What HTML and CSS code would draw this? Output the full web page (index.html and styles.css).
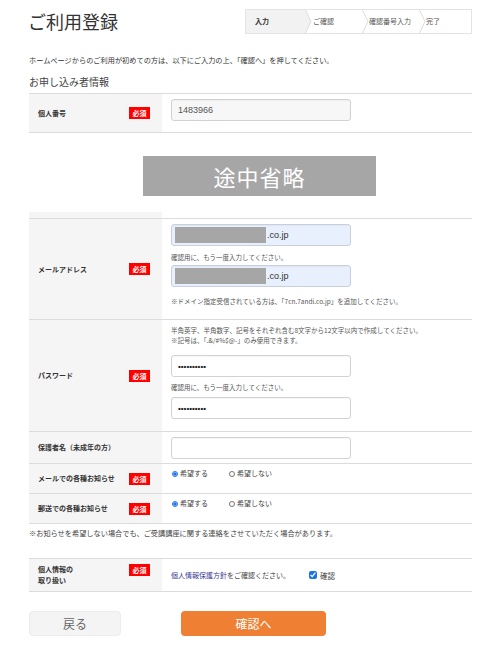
FILE: index.html
```html
<!DOCTYPE html>
<html lang="ja">
<head>
	<meta charset="utf-8">
	<title>ご利用登録</title>
	<link rel="stylesheet" href="styles.css">
</head>
<body>
	<div class="page">
		<div class="head">
			<h1 class="title">ご利用登録</h1>
			<!-- Step indicator -->
			<ol class="steps">
				<li class="step step-current">入力</li>
				<li class="chev chev-current"><svg viewBox="0 0 7 25" width="7" height="25"><path d="M0 0 L6 12.5 L0 25 Z" fill="#f2f2f2"/><path d="M0 0 L6 12.5 L0 25" fill="none" stroke="#dcdcdc" stroke-width="1"/></svg></li>
				<li class="step step-2">ご確認</li>
				<li class="chev"><svg viewBox="0 0 7 25" width="7" height="25"><path d="M0 0 L6 12.5 L0 25" fill="none" stroke="#dcdcdc" stroke-width="1"/></svg></li>
				<li class="step step-3">確認番号入力</li>
				<li class="chev"><svg viewBox="0 0 7 25" width="7" height="25"><path d="M0 0 L6 12.5 L0 25" fill="none" stroke="#dcdcdc" stroke-width="1"/></svg></li>
				<li class="step step-4">完了</li>
			</ol>
		</div>

		<p class="intro">ホームページからのご利用が初めての方は、以下にご入力の上、「確認へ」を押してください。</p>
		<h2 class="section">お申し込み者情報</h2>

		<div class="form-table">
			<div class="row row-num">
				<div class="label"><span>個人番号</span><span class="req">必須</span></div>
				<div class="cell"><input class="text-input readonly" type="text" value="1483966" readonly></div>
			</div>
		</div>

		<div class="omitted">途中省略</div>

		<div class="form-table form-table-cont">
			<div class="row row-stub">
				<div class="label"></div>
				<div class="cell"></div>
			</div>
			<div class="row row-mail">
				<div class="label"><span>メールアドレス</span><span class="req">必須</span></div>
				<div class="cell">
					<div class="text-input autofill"><span class="redact"></span>.co.jp</div>
					<p class="hint">確認用に、もう一度入力してください。</p>
					<div class="text-input autofill"><span class="redact"></span>.co.jp</div>
					<p class="hint hint-note">※ドメイン指定受信されている方は、「7cn.7andi.co.jp」を追加してください。</p>
				</div>
			</div>
			<div class="row row-pass">
				<div class="label"><span>パスワード</span><span class="req">必須</span></div>
				<div class="cell">
					<p class="rule">半角英字、半角数字、記号をそれぞれ含む8文字から12文字以内で作成してください。</p>
					<p class="rule">※記号は、「.&amp;/#%$@-」のみ使用できます。</p>
					<input class="text-input pass" type="password" value="abcdefgh12">
					<p class="hint">確認用に、もう一度入力してください。</p>
					<input class="text-input pass" type="password" value="abcdefgh12">
				</div>
			</div>
			<div class="row row-guard">
				<div class="label"><span>保護者名（未成年の方）</span></div>
				<div class="cell"><input class="text-input" type="text"></div>
			</div>
			<div class="row row-radio">
				<div class="label"><span>メールでの各種お知らせ</span><span class="req">必須</span></div>
				<div class="cell radios">
					<label><input type="radio" name="mail" checked>希望する</label>
					<label><input type="radio" name="mail">希望しない</label>
				</div>
			</div>
			<div class="row row-radio">
				<div class="label"><span>郵送での各種お知らせ</span><span class="req">必須</span></div>
				<div class="cell radios">
					<label><input type="radio" name="post" checked>希望する</label>
					<label><input type="radio" name="post">希望しない</label>
				</div>
			</div>
		</div>

		<p class="notice">※お知らせを希望しない場合でも、ご受講講座に関する連絡をさせていただく場合があります。</p>

		<div class="form-table">
			<div class="row row-info">
				<div class="label"><span>個人情報の<br>取り扱い</span><span class="req">必須</span></div>
				<div class="cell policy">
					<span><a href="#">個人情報保護方針</a>をご確認ください。</span>
					<label class="agree"><input type="checkbox" checked>確認</label>
				</div>
			</div>
		</div>

		<div class="actions">
			<button class="btn btn-back" type="button">戻る</button>
			<button class="btn btn-next" type="submit">確認へ</button>
		</div>
	</div>
</body>
</html>
```

FILE: styles.css
```css
body { margin: 0; background: #ffffff; font-family: "Noto Sans CJK JP", "Noto Sans", sans-serif; color: #333333; }
p { margin: 0; }
.page { padding: 0 28px 0 29px; }

/* header */
.head { display: flex; justify-content: space-between; align-items: flex-start; padding-top: 9px; }
.title { margin: 1px 0 0 -1px; font-size: 18px; line-height: 22px; font-weight: normal; color: #333333; }

.steps { display: flex; list-style: none; margin: 0; padding: 0; width: 227px; height: 25px; box-sizing: border-box; border: 1px solid #e4e4e4; font-size: 7px; color: #555555; }
.steps li { height: 23px; line-height: 23px; }
.step { box-sizing: border-box; }
.step-current { width: 59px; padding-left: 9px; background: #f2f2f2; font-weight: bold; color: #333333; }
.step-2 { width: 50px; padding-left: 1px; }
.step-3 { width: 50px; padding-left: 0; }
.step-4 { flex: 1; padding-left: 0; }
.chev { width: 7px; }
.chev svg { display: block; margin-top: -1px; }

.intro { margin-top: 20px; font-size: 7.2px; line-height: 12px; }
.section { margin: 9px 0 4px 0; font-size: 10px; line-height: 14px; font-weight: normal; color: #444444; }

/* form table */
.form-table { border-top: 1px solid #dcdcdc; }
.form-table-cont { border-top: none; }
.row { display: grid; grid-template-columns: 133px 1fr; border-bottom: 1px solid #dcdcdc; }
.label { display: flex; justify-content: space-between; align-items: center; padding: 0 12px 0 9px; background: #f5f5f5; font-size: 7px; line-height: 11px; font-weight: bold; color: #333333; }
.cell { padding: 0 0 0 9px; }
.req { display: inline-block; width: 21px; height: 12px; line-height: 12px; text-align: center; background: #ff0000; color: #ffffff; font-size: 7px; font-weight: bold; }

.text-input { display: block; box-sizing: border-box; width: 180px; height: 22px; margin: 0; padding: 0 6px; border: 1px solid #d2d2d2; border-radius: 3px; background: #ffffff; font-family: "Liberation Sans", Arial, sans-serif; font-size: 9px; color: #555555; box-shadow: inset 0 1px 1px rgba(0, 0, 0, 0.04); }
.text-input.readonly { background: #f7f7f7; }
.text-input.autofill { display: flex; align-items: center; padding: 0 3px; background: #e8f0fe; border-color: #c9d0dc; color: #333333; }
.redact { display: inline-block; width: 91px; height: 16px; margin-right: 1px; background: #a6a6a6; }
.text-input.pass { font-size: 8px; font-weight: bold; color: #222222; padding-left: 6px; }

.hint, .rule { font-size: 6.5px; line-height: 12px; color: #555555; }
.rule { line-height: 10px; }

.row-num .cell { padding-top: 5px; padding-bottom: 11px; }
.row-stub { height: 6px; }
.row-mail .cell { padding-top: 5px; padding-bottom: 12px; }
.row-mail .hint { margin: 5px 0 2px 0; }
.row-mail .hint-note { margin: 8px 0 0 0; }
.row-pass .cell { padding-top: 5px; padding-bottom: 12px; }
.row-pass .text-input { margin-top: 10px; }
.row-pass .hint { margin: 4px 0 4px 0; }
.row-pass .hint + .text-input { margin-top: 0; }
.row-guard .cell { padding-top: 5px; padding-bottom: 4px; }

.radios { display: flex; align-items: flex-start; height: 29px; padding-top: 4px; box-sizing: border-box; font-size: 7px; line-height: 11px; color: #444444; }
.radios label { display: flex; align-items: center; margin-right: 20px; }
.radios input { width: 6px; height: 6px; margin: 0 2px 0 1px; accent-color: #1a73e8; }

.notice { margin: 3px 0 0 0; font-size: 7.2px; line-height: 12px; color: #444444; }

.notice + .form-table { margin-top: 19px; }
.row-info { height: 32px; }
.row-info .label { align-items: flex-start; padding-top: 5px; }
.policy { display: flex; align-items: center; font-size: 7px; color: #444444; }
.policy a { color: #3a3a96; text-decoration: none; }
.agree { display: flex; align-items: center; margin-left: 19px; font-size: 7.5px; }
.agree input { width: 8px; height: 8px; margin: 0 3px 0 0; accent-color: #1a73e8; }

/* omitted block */
.omitted { width: 233px; height: 40px; margin: 23px 0 16px 114px; background: #a6a6a6; color: #ffffff; font-size: 22px; line-height: 40px; text-align: center; letter-spacing: 1px; }

/* buttons */
.actions { display: flex; margin-top: 19px; }
.btn { height: 25px; border-radius: 4px; font-family: "Noto Sans CJK JP", sans-serif; font-size: 12px; cursor: pointer; padding: 0; }
.btn-back { width: 92px; background: #f4f4f4; border: 1px solid #ececec; color: #666666; }
.btn-next { width: 145px; margin-left: 60px; background: #ee7f33; border: none; color: #ffffff; }
```
